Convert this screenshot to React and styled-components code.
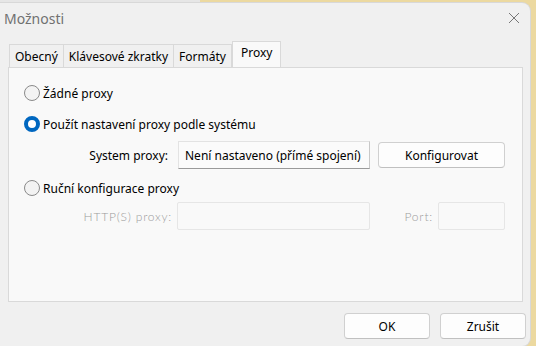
import React from "react";
import styled, { createGlobalStyle } from "styled-components";

const GlobalStyle = createGlobalStyle`
    html, body {
        margin: 0;
        padding: 0;
        width: 536px;
        height: 346px;
        overflow: hidden;
        background: linear-gradient(to right, #e6e6e6 0, #e6e6e6 200px, #ecd9a0 200px);
        font-family: "Noto Sans", "Open Sans", sans-serif;
    }
`;

const Window = styled.div`
    margin-top: 3px;
    width: 530px;
    height: 343px;
    background: #f0f0f0;
    border-radius: 0 8px 8px 0;
    box-shadow: 0 0 0 1px #d8d8d8;
    display: flex;
    flex-direction: column;
`;

const TitleBar = styled.div`
    height: 30px;
    display: flex;
    align-items: center;
    justify-content: space-between;
    padding: 0 10px 0 4px;
`;

const Title = styled.span`
    font-size: 14px;
    color: #707070;
`;

const CloseIcon = styled.svg`
    width: 12px;
    height: 12px;
`;

const Body = styled.div`
    padding: 8px 7px 0 8px;
    display: flex;
    flex-direction: column;
    flex: 1;
`;

const TabRow = styled.div`
    display: flex;
    align-items: flex-end;
    height: 26px;
    padding-left: 1px;
`;

const Tab = styled.div`
    height: ${(p) => (p.$active ? "26px" : "23px")};
    box-sizing: border-box;
    padding: 0 ${(p) => (p.$active ? "8px" : "5px")};
    display: flex;
    align-items: center;
    font-size: 12px;
    color: #000;
    background: ${(p) => (p.$active ? "#f9f9f9" : "#f0f0f0")};
    border: 1px solid #d9d9d9;
    border-bottom: none;
    margin-left: ${(p) => (p.$active ? "1px" : "0")};
    margin-right: ${(p) => (p.$active ? "0" : "-1px")};
    padding-bottom: ${(p) => (p.$active ? "4px" : "0")};
`;

const Panel = styled.div`
    height: 235px;
    box-sizing: border-box;
    background: #f9f9f9;
    border: 1px solid #d9d9d9;
    padding: 17px 0 0 15px;
    display: flex;
    flex-direction: column;
`;

const OptionRow = styled.label`
    display: flex;
    align-items: center;
    gap: 3px;
    height: 16px;
    font-size: 12px;
    color: #000;
    margin-bottom: ${(p) => p.$gap || 0}px;
`;

const Radio = styled.span`
    width: 16px;
    height: 16px;
    box-sizing: border-box;
    border-radius: 50%;
    border: ${(p) => (p.$checked ? "4.5px solid #0067c0" : "1px solid #8a8a8a")};
    background: ${(p) => (p.$checked ? "#fff" : "#f3f3f3")};
`;

const FieldRow = styled.div`
    display: flex;
    align-items: center;
    height: 28px;
    margin-bottom: ${(p) => p.$gap || 0}px;
`;

const FieldLabel = styled.span`
    width: ${(p) => p.$w}px;
    text-align: right;
    padding-right: 10px;
    box-sizing: border-box;
    font-size: 12px;
    color: #000;
`;

const DisabledLabel = styled.span`
    width: ${(p) => p.$w}px;
    text-align: right;
    padding-right: 5px;
    box-sizing: border-box;
    font-family: Lato, "Liberation Sans", sans-serif;
    font-weight: 300;
    font-size: 12px;
    letter-spacing: 0.8px;
    color: #9c9c9c;
`;

const StaticField = styled.div`
    width: 192px;
    height: 28px;
    box-sizing: border-box;
    display: flex;
    align-items: center;
    padding-left: 6px;
    font-size: 12px;
    background: #fbfbfb;
    border: 1px solid #e3e3e3;
    border-bottom: 1px solid #9a9a9a;
    border-right: 1px solid #c8c8c8;
`;

const Input = styled.div`
    width: ${(p) => p.$w}px;
    height: 28px;
    box-sizing: border-box;
    background: #f9f9f9;
    border: 1px solid #e6e6e6;
    border-radius: 2px;
`;

const Button = styled.button`
    width: ${(p) => p.$w}px;
    height: 26px;
    box-sizing: border-box;
    background: #fdfdfd;
    border: 1px solid #d0d0d0;
    border-bottom-color: #c0c0c0;
    border-radius: 4px;
    font-family: inherit;
    font-size: 12px;
    color: #000;
    padding: 0;
    margin-left: ${(p) => p.$ml || 0}px;
`;

const Footer = styled.div`
    display: flex;
    justify-content: flex-end;
    gap: 10px;
    padding: 11px 0 0 0;
    margin-right: -3px;
`;

const App = () => {
    return (
        <>
            <GlobalStyle />
            <Window>
                <TitleBar>
                    <Title>Možnosti</Title>
                    <CloseIcon viewBox="0 0 12 12">
                        <path d="M1 1 L11 11 M11 1 L1 11" stroke="#777" strokeWidth="1" fill="none" />
                    </CloseIcon>
                </TitleBar>
                <Body>
                    <TabRow>
                        <Tab>Obecný</Tab>
                        <Tab>Klávesové zkratky</Tab>
                        <Tab>Formáty</Tab>
                        <Tab $active>Proxy</Tab>
                    </TabRow>
                    <Panel>
                        <OptionRow $gap={15}>
                            <Radio />
                            Žádné proxy
                        </OptionRow>
                        <OptionRow $gap={9}>
                            <Radio $checked />
                            Použít nastavení proxy podle systému
                        </OptionRow>
                        <FieldRow $gap={11}>
                            <FieldLabel $w={154}>System proxy:</FieldLabel>
                            <StaticField>Není nastaveno (přímé spojení)</StaticField>
                            <Button $w={127} $ml={8}>Konfigurovat</Button>
                        </FieldRow>
                        <OptionRow $gap={6}>
                            <Radio />
                            Ruční konfigurace proxy
                        </OptionRow>
                        <FieldRow>
                            <DisabledLabel $w={153}>HTTP(S) proxy:</DisabledLabel>
                            <Input $w={193} />
                            <DisabledLabel $w={68}>Port:</DisabledLabel>
                            <Input $w={67} />
                        </FieldRow>
                    </Panel>
                    <Footer>
                        <Button $w={86}>OK</Button>
                        <Button $w={86}>Zrušit</Button>
                    </Footer>
                </Body>
            </Window>
        </>
    );
};

export default App;
